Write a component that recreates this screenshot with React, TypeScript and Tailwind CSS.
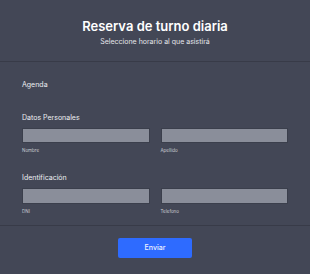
export default function App() {
  return (
    <div className="w-[310px] h-[274px] bg-[#434756] overflow-hidden" style={{ fontFamily: 'Inter, "Noto Sans", sans-serif' }}>
      {/* Header */}
      <header className="h-[62px] flex flex-col items-center pt-[18px] border-b border-[#383b48]">
        <h1 className="text-[13px] leading-[16px] font-semibold text-white">Reserva de turno diaria</h1>
        <p className="text-[7px] leading-[8px] mt-[4px] text-[#e4e5ea]">Seleccione horario al que asistirá</p>
      </header>

      <main className="px-[22px]">
        <div className="h-[40px] flex items-center pt-[6px]">
          <span className="text-[7px] text-[#eceef2]">Agenda</span>
        </div>

        {/* Datos Personales */}
        <div className="pt-[11px]">
          <span className="block text-[7px] leading-[10px] text-[#eceef2]">Datos Personales</span>
          <div className="flex gap-[11px] mt-[5px]">
            <div className="flex-1">
              <div className="h-[15px] bg-[#8a8e9a] border border-[#3b3f4c]" />
              <span className="block text-[4.5px] leading-[6px] mt-[5px] text-[#c9cbd2]">Nombre</span>
            </div>
            <div className="flex-1">
              <div className="h-[15px] bg-[#8a8e9a] border border-[#3b3f4c]" />
              <span className="block text-[4.5px] leading-[6px] mt-[5px] text-[#c9cbd2]">Apellido</span>
            </div>
          </div>
        </div>

        {/* Identificación */}
        <div className="pt-[19px]">
          <span className="block text-[7px] leading-[10px] text-[#eceef2]">Identificación</span>
          <div className="flex gap-[11px] mt-[5px]">
            <div className="flex-1">
              <div className="h-[16px] bg-[#8a8e9a] border border-[#3b3f4c]" />
              <span className="block text-[4.5px] leading-[6px] mt-[5px] text-[#c9cbd2]">DNI</span>
            </div>
            <div className="flex-1">
              <div className="h-[16px] bg-[#8a8e9a] border border-[#3b3f4c]" />
              <span className="block text-[4.5px] leading-[6px] mt-[5px] text-[#c9cbd2]">Telefono</span>
            </div>
          </div>
        </div>
      </main>

      <div className="mt-[10px] border-t border-[#383b48] flex justify-center pt-[12px]">
        <button className="w-[74px] h-[20px] rounded-[2px] bg-[#2e6bff] text-[7px] font-medium text-[#eef2ff]">Enviar</button>
      </div>
    </div>
  );
}
